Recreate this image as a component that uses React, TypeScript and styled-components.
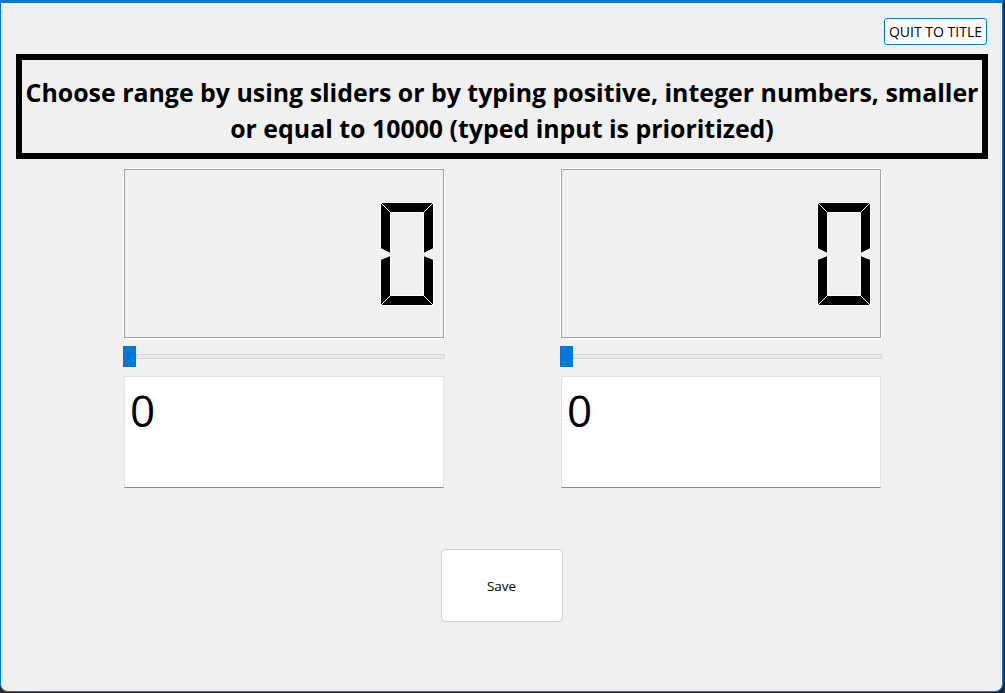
import React from "react";
import styled, { createGlobalStyle } from "styled-components";

const GlobalStyle = createGlobalStyle`
  html, body {
    margin: 0;
    padding: 0;
    background: #262626;
  }
  body {
    font-family: "Open Sans", "Noto Sans", "Liberation Sans", sans-serif;
  }
  * { box-sizing: border-box; }
`;

const Window = styled.div`
  width: 1003px;
  height: 692px;
  background: #f0f0f0;
  border: 1px solid #0078d7;
  border-top: 3px solid #0078d7;
  border-radius: 0 0 8px 8px;
  display: flex;
  flex-direction: column;
  align-items: stretch;
`;

const QuitRow = styled.div`
  display: flex;
  justify-content: flex-end;
  padding: 15px 15px 0 0;
`;

const QuitButton = styled.button`
  width: 103px;
  height: 27px;
  padding: 0;
  background: #fdfdfd;
  border: 1px solid #0078d7;
  border-radius: 3px;
  font-family: "Open Sans", "Noto Sans", sans-serif;
  font-size: 14px;
  color: #000;
  cursor: pointer;
`;

const Banner = styled.div`
  margin: 9px 14px 0 15px;
  height: 105px;
  border: 6px solid #000;
  display: flex;
  align-items: center;
  justify-content: center;
  padding-top: 6px;
`;

const BannerText = styled.p`
  margin: 0;
  text-align: center;
  font-weight: 700;
  font-size: 24.9px;
  line-height: 36px;
  color: #000;
  white-space: nowrap;
`;

const Panels = styled.div`
  display: flex;
  justify-content: center;
  gap: 115px;
  margin-top: 9px;
  padding-left: 2px;
`;

const Column = styled.div`
  width: 322px;
  display: flex;
  flex-direction: column;
`;

const Display = styled.div`
  margin: 1px 1px 0 1px;
  height: 169px;
  border: 1px solid #a0a0a0;
  box-shadow: 0 0 0 1px #ffffff;
  display: flex;
  align-items: center;
  justify-content: flex-end;
  padding-right: 9px;
`;

const SliderRow = styled.div`
  margin-top: 8px;
  height: 21px;
  display: flex;
  align-items: center;
`;

const Thumb = styled.div`
  width: 13px;
  height: 21px;
  background: #0078d7;
  flex: none;
`;

const Track = styled.div`
  flex: 1;
  height: 5px;
  background: #e7eaea;
  border: 1px solid #d6d6d6;
`;

const NumberInput = styled.textarea`
  margin: 9px 0 0 1px;
  width: 320px;
  height: 112px;
  resize: none;
  overflow: hidden;
  background: #ffffff;
  border: 1px solid #e4e4e4;
  border-bottom: 1px solid #858585;
  padding: 3px 5px;
  font-family: "Open Sans", "Noto Sans", sans-serif;
  font-size: 44px;
  line-height: 60px;
  color: #000;
  outline: none;
`;

const SaveRow = styled.div`
  display: flex;
  justify-content: center;
  margin-top: 61px;
`;

const SaveButton = styled.button`
  width: 122px;
  height: 73px;
  background: #fdfdfd;
  border: 1px solid #d0d0d0;
  border-radius: 4px;
  font-family: "Open Sans", "Noto Sans", sans-serif;
  font-size: 13.5px;
  color: #000;
  cursor: pointer;
`;

const SevenSegZero: React.FC = () => (
  <svg width="54" height="104" viewBox="-0.5 -0.5 54 104">
    <g fill="#000" stroke="#ffffff" strokeWidth="1" strokeLinejoin="miter">
      <polygon points="0,0 53,0 43,10 10,10" />
      <polygon points="0,0 10,10 10,51 0,46" />
      <polygon points="0,57 10,53 10,93 0,103" />
      <polygon points="53,0 53,46 43,51 43,10" />
      <polygon points="53,57 53,103 43,93 43,53" />
      <polygon points="0,103 10,93 43,93 53,103" />
    </g>
  </svg>
);

const RangeColumn: React.FC = () => (
  <Column>
    <Display>
      <SevenSegZero />
    </Display>
    <SliderRow>
      <Thumb />
      <Track />
    </SliderRow>
    <NumberInput defaultValue="0" />
  </Column>
);

export default function App() {
  return (
    <>
      <GlobalStyle />
      <Window>
        <QuitRow>
          <QuitButton>QUIT TO TITLE</QuitButton>
        </QuitRow>
        <Banner>
          <BannerText>
            Choose range by using sliders or by typing positive, integer numbers, smaller
            <br />
            or equal to 10000 (typed input is prioritized)
          </BannerText>
        </Banner>
        <Panels>
          <RangeColumn />
          <RangeColumn />
        </Panels>
        <SaveRow>
          <SaveButton>Save</SaveButton>
        </SaveRow>
      </Window>
    </>
  );
}
